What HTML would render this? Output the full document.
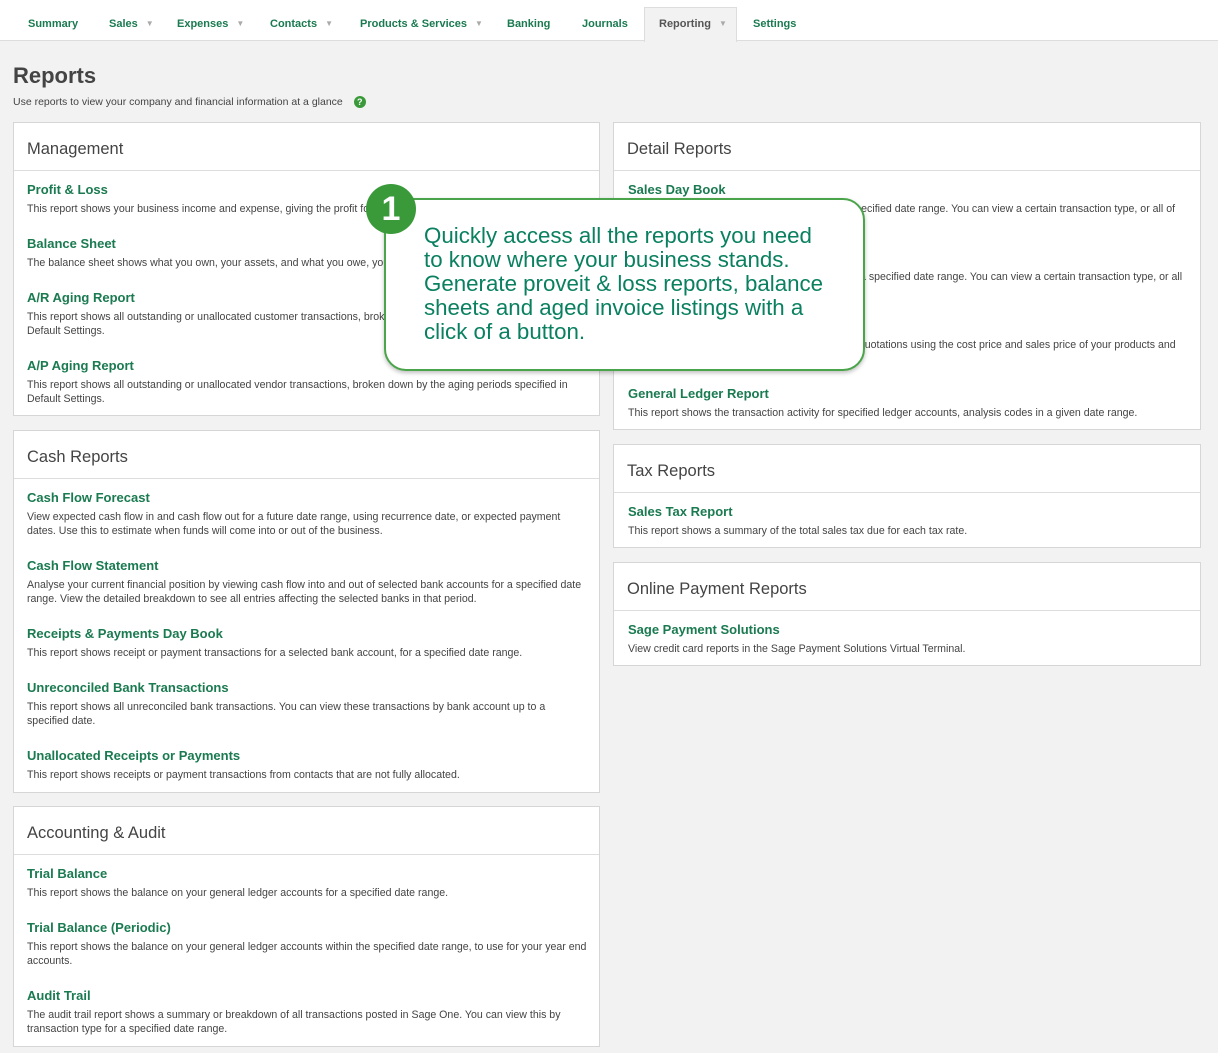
<!DOCTYPE html>
<html><head><style>
*{margin:0;padding:0;box-sizing:border-box}
body{width:1218px;height:1053px;background:#f2f2f2;font-family:"Liberation Sans",Arial,sans-serif;position:relative;overflow:hidden}
.nav{position:absolute;left:0;top:0;width:1218px;height:41px;background:#fff;border-bottom:1px solid #ddd}
.nav span{position:absolute;top:18px;font-size:11px;font-weight:bold;color:#1a7a50}
.nav i{font-style:normal;color:#aaa;font-size:8px;margin-left:8px;vertical-align:1px}
.tab{position:absolute;left:644px;top:7px;width:93px;height:35px;background:#f2f2f2;border:1px solid #ddd;border-bottom:none}
h1{position:absolute;left:13px;top:63px;font-size:22px;color:#444;font-weight:bold}
.sub{position:absolute;left:13px;top:96px;font-size:10.5px;color:#444}
.q{display:inline-block;width:12px;height:12px;border-radius:50%;background:#3a9a3a;color:#fff;font-size:9px;text-align:center;line-height:12px;font-weight:bold;margin-left:8px}
.p{position:absolute;background:#fff;border:1px solid #d6d6d6}
.p .h{height:48px;border-bottom:1px solid #ddd;padding:17px 0 0 13px;font-size:16.5px;color:#444}
.it{position:absolute;left:13px;right:12px;margin-top:1px}
.it b{display:block;font-size:13px;color:#1a7a50;margin-bottom:5px}
.it p{font-size:10.6px;color:#444;line-height:14px}
.call{position:absolute;left:384px;top:198px;width:481px;height:173px;background:#fff;border:2px solid #4aa54a;border-radius:22px;box-shadow:0 2px 4px rgba(0,0,0,.25)}
.call div{position:absolute;left:38px;top:24px;font-size:22.3px;line-height:24px;color:#0a8060}
.num{position:absolute;left:366px;top:184px;width:50px;height:50px;border-radius:50%;background:#3a9a3a;color:#fff;font-size:34px;font-weight:bold;text-align:center;line-height:50px}
</style></head><body>
<div class="nav">
<div class="tab"></div>
<span style="left:28px">Summary</span>
<span style="left:109px">Sales<i>▼</i></span>
<span style="left:177px">Expenses<i>▼</i></span>
<span style="left:270px">Contacts<i>▼</i></span>
<span style="left:360px">Products &amp; Services<i>▼</i></span>
<span style="left:507px">Banking</span>
<span style="left:582px">Journals</span>
<span style="left:659px;color:#555">Reporting<i>▼</i></span>
<span style="left:753px">Settings</span>
</div>
<h1>Reports</h1>
<div class="sub">Use reports to view your company and financial information at a glance <span class="q">?</span></div>

<div class="p" style="left:13px;top:122px;width:587px;height:294px"><div class="h">Management</div>
<div class="it" style="top:58px"><b>Profit &amp; Loss</b><p>This report shows your business income and expense, giving the profit for a specified date range.</p></div>
<div class="it" style="top:112px"><b>Balance Sheet</b><p>The balance sheet shows what you own, your assets, and what you owe, your liabilities.</p></div>
<div class="it" style="top:166px"><b>A/R Aging Report</b><p>This report shows all outstanding or unallocated customer transactions, broken down by the aging periods specified in Default Settings.</p></div>
<div class="it" style="top:234px"><b>A/P Aging Report</b><p>This report shows all outstanding or unallocated vendor transactions, broken down by the aging periods specified in Default Settings.</p></div>
</div>

<div class="p" style="left:13px;top:430px;width:587px;height:363px"><div class="h">Cash Reports</div>
<div class="it" style="top:58px"><b>Cash Flow Forecast</b><p>View expected cash flow in and cash flow out for a future date range, using recurrence date, or expected payment dates. Use this to estimate when funds will come into or out of the business.</p></div>
<div class="it" style="top:126px"><b>Cash Flow Statement</b><p>Analyse your current financial position by viewing cash flow into and out of selected bank accounts for a specified date range. View the detailed breakdown to see all entries affecting the selected banks in that period.</p></div>
<div class="it" style="top:194px"><b>Receipts &amp; Payments Day Book</b><p>This report shows receipt or payment transactions for a selected bank account, for a specified date range.</p></div>
<div class="it" style="top:248px"><b>Unreconciled Bank Transactions</b><p>This report shows all unreconciled bank transactions. You can view these transactions by bank account up to a specified date.</p></div>
<div class="it" style="top:316px"><b>Unallocated Receipts or Payments</b><p>This report shows receipts or payment transactions from contacts that are not fully allocated.</p></div>
</div>

<div class="p" style="left:13px;top:806px;width:587px;height:241px"><div class="h">Accounting &amp; Audit</div>
<div class="it" style="top:58px"><b>Trial Balance</b><p>This report shows the balance on your general ledger accounts for a specified date range.</p></div>
<div class="it" style="top:112px"><b>Trial Balance (Periodic)</b><p>This report shows the balance on your general ledger accounts within the specified date range, to use for your year end accounts.</p></div>
<div class="it" style="top:180px"><b>Audit Trail</b><p>The audit trail report shows a summary or breakdown of all transactions posted in Sage One. You can view this by transaction type for a specified date range.</p></div>
</div>

<div class="p" style="left:613px;top:122px;width:588px;height:308px"><div class="h">Detail Reports</div>
<div class="it" style="top:58px;left:14px"><b>Sales Day Book</b><p>This report shows your sales transactions for a specified date range. You can view a certain transaction type, or all of your sales transactions.</p></div>
<div class="it" style="top:126px;left:14px"><b>Purchase Day Book</b><p>This report shows your purchase transactions for a specified date range. You can view a certain transaction type, or all of your purchase transactions.</p></div>
<div class="it" style="top:194px;left:14px"><b>Product Profit</b><p>This report shows the profit on your invoices and quotations using the cost price and sales price of your products and services.</p></div>
<div class="it" style="top:262px;left:14px"><b>General Ledger Report</b><p>This report shows the transaction activity for specified ledger accounts, analysis codes in a given date range.</p></div>
</div>

<div class="p" style="left:613px;top:444px;width:588px;height:104px"><div class="h">Tax Reports</div>
<div class="it" style="top:58px;left:14px"><b>Sales Tax Report</b><p>This report shows a summary of the total sales tax due for each tax rate.</p></div>
</div>

<div class="p" style="left:613px;top:562px;width:588px;height:104px"><div class="h">Online Payment Reports</div>
<div class="it" style="top:58px;left:14px"><b>Sage Payment Solutions</b><p>View credit card reports in the Sage Payment Solutions Virtual Terminal.</p></div>
</div>

<div class="call"><div>Quickly access all the reports you need<br>to know where your business stands.<br>Generate proveit &amp; loss reports, balance<br>sheets and aged invoice listings with a<br>click of a button.</div></div>
<div class="num">1</div>
</body></html>
